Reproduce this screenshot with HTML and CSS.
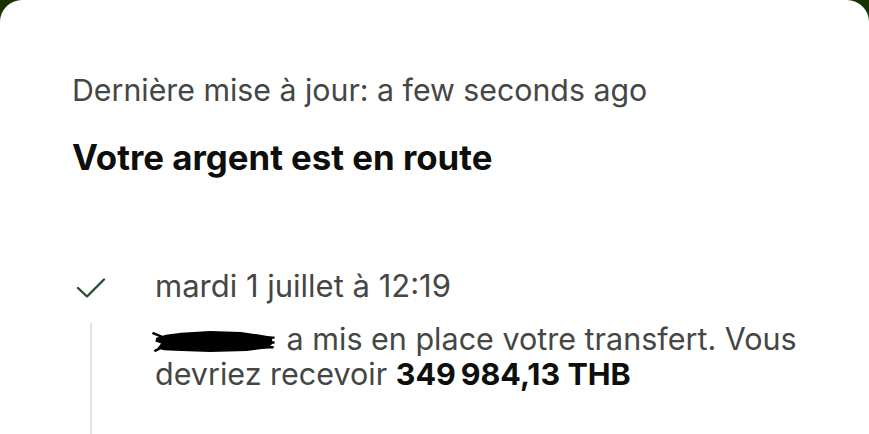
FILE: index.html
```html
<!DOCTYPE html>
<html lang="fr">

<head>
    <meta charset="UTF-8">
    <meta name="viewport" content="width=device-width, initial-scale=1.0">
    <title>Transfert</title>
    <link rel="stylesheet" href="styles.css">
</head>

<body>
    <div class="card">
        <p class="updated">Dernière mise à jour: a few seconds ago</p>
        <h1 class="title">Votre argent est en route</h1>

        <div class="step">
            <div class="rail">
                <svg class="check" viewBox="0 0 30 22" width="30" height="22">
                    <path d="M2 11 L11 19.5 L28 2.5" fill="none" stroke="#1f4f2e" stroke-width="2.4" stroke-linecap="round" stroke-linejoin="round" />
                </svg>
                <div class="line"></div>
            </div>
            <div class="content">
                <div class="date">mardi 1 juillet à 12:19</div>
                <p class="text">
                    <svg class="redact" viewBox="0 0 128 26" width="128" height="25">
                        <path d="M4 9 L14 6 L30 4 L60 2 L92 3 L112 6 L124 8 L125 15 L120 20 L98 23 L60 24 L30 23 L12 22 L5 20 L9 15 L3 13 Z" fill="#000" />
                        <path d="M0 4 L12 9 M2 23 L14 17 M110 9 L127 9 M108 14 L127 14 M108 19 L126 19" stroke="#000" stroke-width="2.5" />
                    </svg>
                    a mis en place votre transfert. Vous devriez recevoir <strong>349&#8239;984,13 THB</strong>
                </p>
            </div>
        </div>
    </div>
</body>

</html>
```

FILE: styles.css
```css
html, body {
    height: 100%;
}

body {
    margin: 0;
    background: #163300;
    font-family: Inter, "Noto Sans", sans-serif;
    overflow: hidden;
}

.card {
    background: #fff;
    height: 100%;
    border-radius: 22px 22px 0 0;
    padding: 70px 40px 0 72px;
    box-sizing: border-box;
    overflow: hidden;
}

.updated {
    margin: 0;
    font-size: 30.3px;
    line-height: 40px;
    color: #454745;
}

.title {
    margin: 27px 0 0;
    font-size: 34.8px;
    line-height: 40px;
    font-weight: 700;
    color: #0e0f0c;
}

.step {
    display: flex;
    margin-top: 91px;
}

.rail {
    width: 38px;
    display: flex;
    flex-direction: column;
    align-items: center;
    flex-shrink: 0;
}

.check {
    margin-top: 9px;
}

.line {
    width: 2px;
    background: #e2e2e0;
    margin-top: 24px;
    height: 120px;
}

.content {
    margin-left: 45px;
}

.date {
    font-size: 31px;
    line-height: 36px;
    color: #454745;
}

.text {
    margin: 17px 0 0;
    font-size: 30.5px;
    line-height: 35px;
    color: #454745;
}

.text strong {
    font-weight: 700;
    color: #0e0f0c;
}

.redact {
    margin-left: -5px;
    vertical-align: -4px;
}
```
